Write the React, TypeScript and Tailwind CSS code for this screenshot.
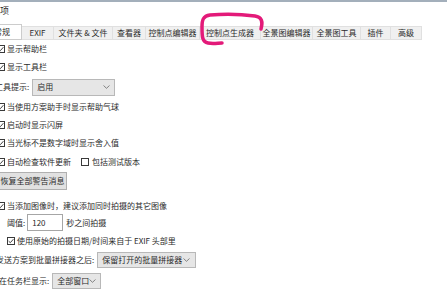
import React from "react";

const Check = ({ checked = true }: { checked?: boolean }) => (
  <span className="flex h-[8px] w-[8px] shrink-0 items-center justify-center border border-[#3a3a3a] bg-white">
    {checked && (
      <svg width="6" height="6" viewBox="0 0 6 6">
        <path d="M0.6 3.1 L2.3 4.7 L5.4 1.2" fill="none" stroke="#2a2a2a" strokeWidth="0.9" />
      </svg>
    )}
  </span>
);

const Chevron = () => (
  <svg width="7" height="4" viewBox="0 0 7 4" className="shrink-0">
    <path d="M0.5 0.5 L3.5 3.3 L6.5 0.5" fill="none" stroke="#6a6a6a" strokeWidth="0.8" />
  </svg>
);

const CheckRow = ({ label, h, indent = false }: { label: string; h: string; indent?: boolean }) => (
  <div className={`flex items-center gap-[2px] ${h} ${indent ? "ml-[7px]" : "ml-[-3px]"}`}>
    <Check />
    <span>{label}</span>
  </div>
);

const tabs: { t: string; w: string }[] = [
  { t: "EXIF", w: "w-[32px]" },
  { t: "文件夹 & 文件", w: "w-[59px]" },
  { t: "查看器", w: "w-[33px]" },
  { t: "控制点编辑器", w: "w-[54px]" },
  { t: "控制点生成器", w: "w-[61px]" },
  { t: "全景图编辑器", w: "w-[52px]" },
  { t: "全景图工具", w: "w-[48px]" },
  { t: "插件", w: "w-[30px]" },
  { t: "高级", w: "w-[31px]" },
];

export default function App() {
  return (
    <div
      className="relative h-[289px] w-[447px] overflow-hidden bg-white text-[8px] leading-none text-[#2b2b2b]"
      style={{ fontFamily: '"Noto Sans CJK SC", "Noto Sans", sans-serif' }}
    >
      <div className="h-[2px] w-full bg-[#a3afbb]" />
      <div className="flex h-[17px] items-center">
        <span className="ml-[-9px] text-[9px]">选项</span>
      </div>

      {/* tab strip */}
      <div className="mt-[5px] flex h-[16px] items-end">
        <div className="ml-[-14px] flex h-[16px] w-[36px] items-center border border-[#cccccc] bg-white pl-[7px]">
          常规
        </div>
        {tabs.map((tb) => (
          <div
            key={tb.t}
            className={`flex h-[14px] ${tb.w} shrink-0 items-center justify-center whitespace-nowrap border-t border-r border-b border-[#e0e0e0] bg-[#f0f0f0]`}
          >
            {tb.t}
          </div>
        ))}
      </div>

      <div className="flex flex-col">
        <CheckRow label="显示帮助栏" h="h-[18px]" />
        <CheckRow label="显示工具栏" h="h-[18px]" />
        <div className="ml-[-5px] flex h-[22px] items-center gap-[3px]">
          <span>工具提示:</span>
          <div className="flex h-[17px] w-[83px] items-center justify-between border border-[#b8b8b8] bg-[#e6e6e6] pl-[4px] pr-[4px]">
            <span>启用</span>
            <Chevron />
          </div>
        </div>
        <CheckRow label="当使用方案助手时显示帮助气球" h="h-[18px]" />
        <CheckRow label="启动时显示闪屏" h="h-[18px]" />
        <CheckRow label="当光标不是数字域时显示舍入值" h="h-[18px]" />
        <div className="ml-[-3px] flex h-[19px] items-center">
          <div className="flex items-center gap-[2px]">
            <Check />
            <span>自动检查软件更新</span>
          </div>
          <div className="ml-[10px] flex items-center gap-[3px]">
            <Check checked={false} />
            <span>包括测试版本</span>
          </div>
        </div>
        <div className="flex h-[20px] items-center">
          <div className="ml-[-2px] flex h-[18px] w-[69px] items-center justify-center border border-[#b0b0b0] bg-[#e1e1e1]">
            恢复全部警告消息
          </div>
        </div>
        <div className="mt-[6px]">
          <CheckRow label="当添加图像时，建议添加同时拍摄的其它图像" h="h-[17px]" />
        </div>
        <div className="ml-[7px] flex h-[17px] items-center">
          <span>阈值:</span>
          <div className="ml-[2px] flex h-[17px] w-[36px] items-center border border-[#a6a6a6] bg-white pl-[4px]">
            120
          </div>
          <span className="ml-[3px]">秒之间拍摄</span>
        </div>
        <CheckRow label="使用原始的拍摄日期/时间来自于 EXIF 头部里" h="h-[20px]" indent />
        <div className="ml-[-4px] flex h-[17px] items-center gap-[3px]">
          <span>发送方案到批量拼接器之后:</span>
          <div className="flex h-[16px] w-[99px] items-center justify-between border border-[#b8b8b8] bg-[#e6e6e6] pl-[4px] pr-[5px]">
            <span>保留打开的批量拼接器</span>
            <Chevron />
          </div>
        </div>
        <div className="ml-[-1px] mt-[4px] flex h-[17px] items-center gap-[3px]">
          <span>在任务栏显示:</span>
          <div className="flex h-[16px] w-[49px] items-center justify-between border border-[#b8b8b8] bg-[#e6e6e6] pl-[4px] pr-[4px]">
            <span>全部窗口</span>
            <Chevron />
          </div>
        </div>
      </div>

      {/* hand-drawn annotation */}
      <svg className="pointer-events-none absolute left-0 top-0" width="447" height="60" viewBox="0 0 447 60">
        <path
          d="M261 29 C263 22 262 17 255 16 C240 14 222 14 210 15 C203 16 202 20 202 27 C202 36 202 42 208 43 C213 44 218 43 222 43"
          fill="none"
          stroke="#e31a79"
          strokeWidth="3.5"
          strokeLinecap="round"
        />
      </svg>
    </div>
  );
}
